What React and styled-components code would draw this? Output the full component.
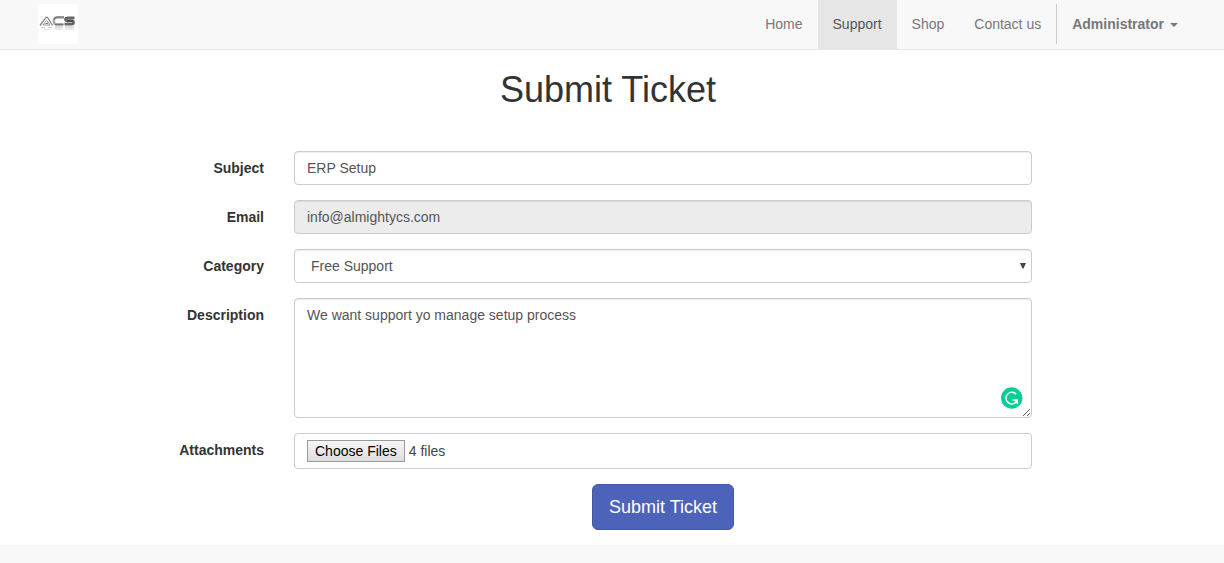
import React, { useRef, useState } from "react";
import styled, { createGlobalStyle, css } from "styled-components";

const GlobalStyle = createGlobalStyle`
  *, *::before, *::after { box-sizing: border-box; }
  html { background: #f8f8f8; }
  body {
    margin: 0;
    color: #333;
    font-family: "Liberation Sans", Arial, sans-serif;
    font-size: 14px;
    line-height: 20px;
  }
`;

const Header = styled.header`
  padding-right: 8px;
  background: #f8f8f8;
  border-bottom: 1px solid #e7e7e7;
`;

const Container = styled.div`
  max-width: 1170px;
  margin: 0 auto;
`;

const Bar = styled(Container)`
  display: flex;
  justify-content: space-between;
  align-items: flex-start;
`;

const Brand = styled.a`
  display: block;
  padding: 4px 15px;
  svg { display: block; background: #fff; }
`;

const Menu = styled.ul`
  display: flex;
  align-items: flex-start;
  margin: 0;
  padding: 0;
  list-style: none;
`;

const NavLink = styled.a`
  display: block;
  padding: 14px 15px 15px;
  color: ${(p) => (p.$active ? "#555" : "#777")};
  background: ${(p) => (p.$active ? "#e6e6e6" : "transparent")};
  font-weight: ${(p) => (p.$bold ? 700 : 400)};
  text-decoration: none;
`;

const Divider = styled.li`
  width: 1px;
  height: 40px;
  margin-top: 4px;
  background: #ccc;
`;

const Caret = styled.span`
  display: inline-block;
  margin-left: 6px;
  vertical-align: middle;
  border-top: 4px solid;
  border-left: 4px solid transparent;
  border-right: 4px solid transparent;
`;

const Main = styled.main`
  padding: 20px 8px 15px 0;
  background: #fff;
`;

const Title = styled.h1`
  margin: 0 0 41px;
  font-size: 36px;
  font-weight: 400;
  line-height: 40px;
  text-align: center;
`;

const Form = styled.form`
  display: grid;
  gap: 15px;
  padding: 0 15px;
`;

const Row = styled.div`
  display: grid;
  grid-template-columns: 226px minmax(0, 738px);
  column-gap: 30px;
`;

const Label = styled.label`
  padding-top: 7px;
  font-weight: 700;
  text-align: right;
`;

const FieldBox = styled.div`
  position: relative;
  display: grid;
`;

const control = css`
  display: block;
  width: 100%;
  height: 34px;
  margin: 0;
  padding: 6px 12px;
  color: #555;
  background: #fff;
  border: 1px solid #ccc;
  border-radius: 4px;
  box-shadow: inset 0 1px 1px rgba(0, 0, 0, 0.075);
  font: inherit;
`;

const TextInput = styled.input`
  ${control}
  &:read-only { background: #ececec; }
`;

const Select = styled.select`
  ${control}
  padding-left: 16px;
  appearance: none;
`;

const SelectArrow = styled.svg`
  position: absolute;
  top: 13px;
  right: 6px;
  pointer-events: none;
`;

const TextArea = styled.textarea`
  ${control}
  height: 120px;
  resize: vertical;
`;

const AssistantBadge = styled.svg`
  position: absolute;
  right: 9px;
  bottom: 9px;
  pointer-events: none;
`;

const FileBox = styled.div`
  ${control}
  display: flex;
  align-items: center;
  gap: 4px;
  height: 36px;
  box-shadow: none;
`;

const FileInput = styled.input`
  position: absolute;
  width: 1px;
  height: 1px;
  opacity: 0;
`;

const ChooseButton = styled.button`
  height: 22px;
  padding: 0 7px;
  color: #000;
  background: linear-gradient(#f6f6f6, #dedede);
  border: 1px solid #999;
  border-radius: 0;
  font: inherit;
`;

const FileCount = styled.output`
  color: #444;
`;

const SubmitButton = styled.button`
  grid-column: 2;
  justify-self: center;
  height: 46px;
  padding: 0 16px;
  color: #fff;
  background: #4c63b9;
  border: 1px solid #4459a6;
  border-radius: 6px;
  font: inherit;
  font-size: 18px;
  line-height: 24px;
`;

const links = ["Home", "Support", "Shop", "Contact us"];

function Logo() {
  return (
    <svg width="40" height="40" viewBox="0 0 40 40" fill="none" role="img" aria-label="ACS">
      <path d="M2 21.5 L8 13.3 H9.500 L14.500 21.5" stroke="#888" strokeWidth="1.300" />
      <path d="M5 21 L8.700 16.300 L12 21 Z" stroke="#999" />
      <path d="M7.500 19.500 H10" stroke="#777" />
      <path d="M26 13.500 H19 Q16 13.500 15.800 17 Q15.800 20.300 18.500 20.300 H25.500" stroke="#aaa" strokeWidth="2.400" />
      <path d="M26 13 H19 Q17 13 16 15.500 M17 20.800 H25.500" stroke="#666" strokeWidth="1.100" />
      <path d="M36.500 13.800 H29.500 Q27.500 13.800 27.500 15.300 T29.500 16.900 H34 Q35.500 16.900 35.500 18.500 T33.500 20.100 H26.500" stroke="#666" strokeWidth="2.700" />
      <path d="M29 16.900 H35" stroke="#444" strokeWidth="1.300" />
      <g opacity="0.600">
        <path d="M3 23.500 H7 M10 23.500 H14 M17 23 H25 M27 23 H36" stroke="#bbb" strokeWidth="1.600" />
        <path d="M6 25.500 H12 M17 25 H24 M28 25 H36" stroke="#ddd" strokeWidth="2" />
      </g>
    </svg>
  );
}

function Field({ id, label, children }) {
  return (
    <Row>
      <Label htmlFor={id}>{label}</Label>
      <FieldBox>{children}</FieldBox>
    </Row>
  );
}

export default function App() {
  const picker = useRef(null);
  const [count, setCount] = useState(4);

  return (
    <>
      <GlobalStyle />
      <Header>
        <Bar as="nav">
          <Brand href="#home"><Logo /></Brand>
          <Menu>
            {links.map((name) => (
              <li key={name}>
                <NavLink href="#" $active={name === "Support"}>{name}</NavLink>
              </li>
            ))}
            <Divider role="separator" />
            <li>
              <NavLink href="#account" $bold>Administrator<Caret /></NavLink>
            </li>
          </Menu>
        </Bar>
      </Header>
      <Main>
        <Container>
          <Title>Submit Ticket</Title>
          <Form onSubmit={(e) => e.preventDefault()}>
            <Field id="subject" label="Subject">
              <TextInput id="subject" type="text" defaultValue="ERP Setup" />
            </Field>
            <Field id="email" label="Email">
              <TextInput id="email" type="email" defaultValue="info@almightycs.com" readOnly />
            </Field>
            <Field id="category" label="Category">
              <Select id="category" defaultValue="free">
                <option value="free">Free Support</option>
              </Select>
              <SelectArrow width="6" height="7" viewBox="0 0 6 7" aria-hidden="true">
                <path d="M0 1 H6 L3.500 6.500 H2.500 Z" fill="#444" />
              </SelectArrow>
            </Field>
            <Field id="description" label="Description">
              <TextArea
                id="description"
                spellCheck={false}
                defaultValue="We want support yo manage setup process"
              />
              <AssistantBadge width="22" height="22" viewBox="0 0 22 22" fill="none" aria-hidden="true">
                <circle cx="10.700" cy="11" r="10.700" fill="#05cf95" />
                <path d="M15.200 7.300 A5.800 5.800 0 1 0 15.300 14.800" stroke="#fff" strokeWidth="1.500" />
                <path d="M11.500 12.900 H16.300 V17" stroke="#fff" strokeWidth="1.500" />
                <path d="M13.500 12.900 H16.500 V16 Z" fill="#fff" />
              </AssistantBadge>
            </Field>
            <Field id="attachments" label="Attachments">
              <FileBox>
                <FileInput
                  id="attachments"
                  type="file"
                  multiple
                  ref={picker}
                  onChange={(e) => setCount(e.target.files.length)}
                />
                <ChooseButton type="button" onClick={() => picker.current.click()}>
                  Choose Files
                </ChooseButton>
                <FileCount htmlFor="attachments">{count} files</FileCount>
              </FileBox>
            </Field>
            <Row>
              <SubmitButton type="submit">Submit Ticket</SubmitButton>
            </Row>
          </Form>
        </Container>
      </Main>
    </>
  );
}
